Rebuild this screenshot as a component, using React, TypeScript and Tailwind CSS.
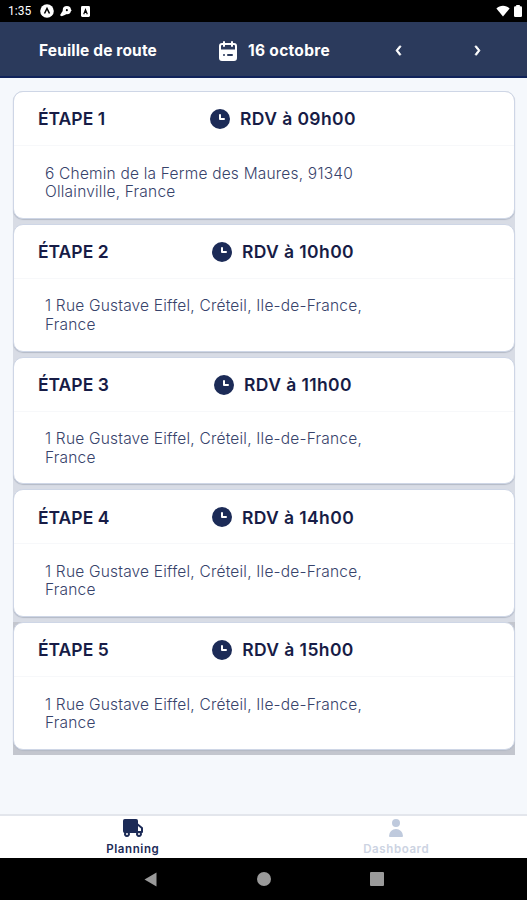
import type { ReactNode } from 'react';

type Stop = { step: number; time: string; address: string };

const CRETEIL = '1 Rue Gustave Eiffel, Créteil, Ile-de-France, France';

const STOPS: Stop[] = [
  { step: 1, time: '09h00', address: '6 Chemin de la Ferme des Maures, 91340 Ollainville, France' },
  { step: 2, time: '10h00', address: CRETEIL },
  { step: 3, time: '11h00', address: CRETEIL },
  { step: 4, time: '14h00', address: CRETEIL },
  { step: 5, time: '15h00', address: CRETEIL },
];

function Icon({ className, children }: { className: string; children: ReactNode }) {
  return (
    <svg viewBox="0 0 24 24" fill="currentColor" className={`block shrink-0 ${className}`} aria-hidden="true">
      {children}
    </svg>
  );
}

function StatusBar() {
  return (
    <div className="flex h-[22px] items-center bg-black pr-[5px] pl-2 text-white">
      <span className="w-8 font-[Roboto] text-xs">1:35</span>
      <svg viewBox="0 0 14 14" className="size-3.5" aria-hidden="true">
        <circle cx="7" cy="7" r="6.8" fill="#fff" />
        <path d="M4.5 9.5 7 4.5l2.5 5" fill="none" stroke="#000" strokeWidth="1.5" />
      </svg>
      <svg viewBox="0 0 14 14" className="ml-1.5 size-3" aria-hidden="true">
        <circle cx="8" cy="6" r="4.8" fill="#fff" />
        <path d="m0 12 3-5 4 4-5 2z" fill="#fff" />
        <path d="M11 4.5 14 6l-3 1.5z" fill="#fff" />
        <circle cx="8" cy="6" r="1.2" />
      </svg>
      <svg viewBox="0 0 10 12" className="ml-[9px] h-[11px] w-[9px]" aria-hidden="true">
        <rect width="10" height="12" rx="1.5" fill="#fff" />
        <path d="m3 9 2-5 2 5M3.7 7h2.6" fill="none" stroke="#000" strokeWidth="1.3" />
      </svg>
      <svg viewBox="0 0 14 12" className="ml-auto h-3 w-3.5" aria-hidden="true">
        <path d="M.4 3.5C4-.2 10-.2 13.6 3.5L7 11.5z" fill="#fff" />
      </svg>
      <svg viewBox="0 0 8 12" className="ml-1 h-3 w-2" aria-hidden="true">
        <rect x="2.2" width="3.6" height="2" fill="#fff" />
        <rect y="1.2" width="8" height="10.8" rx="1.2" fill="#fff" />
      </svg>
    </div>
  );
}

function Header() {
  return (
    <header className="flex h-14 items-center border-b-2 border-[#10235a] bg-[#2b3a5c] pt-1 text-[15.5px] font-bold whitespace-nowrap text-white">
      <h1 className="ml-[39px] w-[118px] tracking-[0.15px]">Feuille de route</h1>
      <Icon className="ml-[59px] size-6">
        <path d="M18 4h-1V3a1 1 0 0 0-2 0v1H9V3a1 1 0 0 0-2 0v1H6a3 3 0 0 0-3 3v12a3 3 0 0 0 3 3h12a3 3 0 0 0 3-3V7a3 3 0 0 0-3-3zM8 17a1 1 0 1 1 1-1 1 1 0 0 1-1 1zm8 0h-4a1 1 0 0 1 0-2h4a1 1 0 0 1 0 2zm3-6.5H5V7a1 1 0 0 1 1-1h1v1a1 1 0 0 0 2 0V6h6v1a1 1 0 0 0 2 0V6h1a1 1 0 0 1 1 1z" />
      </Icon>
      <span className="ml-2 w-[83px] tracking-[0.3px]">16 octobre</span>
      <button type="button" aria-label="Jour précédent" className="ml-[58px] pb-0.5">
        <Icon className="size-[19px] stroke-current stroke-1">
          <path d="M13.83 18a1 1 0 0 1-.78-.37l-3.83-5a1 1 0 0 1 0-1.27l4-5a1 1 0 0 1 1.54 1.28L11.29 12l3.32 4.36a1 1 0 0 1-.78 1.64z" />
        </Icon>
      </button>
      <button type="button" aria-label="Jour suivant" className="ml-[60px] pb-0.5">
        <Icon className="size-[19px] stroke-current stroke-1">
          <path d="M10.17 18a1 1 0 0 0 .78-.37l3.83-5a1 1 0 0 0 0-1.27l-4-5a1 1 0 0 0-1.54 1.28L12.71 12l-3.32 4.36a1 1 0 0 0 .78 1.64z" />
        </Icon>
      </button>
    </header>
  );
}

function StopCard({ stop }: { stop: Stop }) {
  return (
    <li className="h-[132.75px] bg-[#d8dce5] pb-[5px] first:rounded-t-[10px] last:bg-[#c3c6ce]">
      <article className="h-full rounded-[10px] border border-[#ced6e6] bg-white shadow-[0_1px_1px_#b4bac6]">
        <div className="flex h-[54px] items-center border-b border-[#f7f8fa] pt-px pl-6 text-[17.5px] font-semibold whitespace-nowrap text-[#171c46]">
          <h2 className="pt-px">ÉTAPE {stop.step}</h2>
          <div className="mr-[132px] ml-auto flex w-[200px] items-center justify-center">
            <Icon className="mr-2 size-6 text-[#1c2b57]">
              <path d="M12 2a10 10 0 1 0 10 10A10 10 0 0 0 12 2zm4 11h-4a1 1 0 0 1-1-1V8a1 1 0 0 1 2 0v3h3a1 1 0 0 1 0 2z" />
            </Icon>
            <span className="pt-px tracking-[0.4px]">RDV à {stop.time}</span>
          </div>
        </div>
        <address className="w-[370px] pt-[18.5px] pl-[31px] text-[15.5px] leading-[18.5px] font-light tracking-[0.2px] text-[#37436b] not-italic">
          {stop.address}
        </address>
      </article>
    </li>
  );
}

function TabBar() {
  return (
    <nav className="flex h-11 border-t-2 border-[#e3e6ec] bg-white text-[11.5px] leading-[18px] text-[#1c2b57]">
      <div className="flex flex-1 flex-col items-center pl-0.5">
        <Icon className="size-6">
          <path d="M21.6 11.22 17 7.52V5a1.91 1.91 0 0 0-1.81-2H3.79A1.91 1.91 0 0 0 2 5v10a2 2 0 0 0 1.2 1.88 3 3 0 1 0 5.6.12h6.36a3 3 0 1 0 5.64 0h.2a1 1 0 0 0 1-1v-4a1 1 0 0 0-.4-.78zM20 12.48V15h-3v-4.92zM7 18a1 1 0 1 1-1-1 1 1 0 0 1 1 1zm12 0a1 1 0 1 1-1-1 1 1 0 0 1 1 1z" />
        </Icon>
        <span className="font-semibold tracking-[0.6px]">Planning</span>
      </div>
      <div className="flex flex-1 flex-col items-center pl-0.5">
        <Icon className="size-6 text-[#bfcadd]">
          <path d="M12 11a4 4 0 1 0-4-4 4 4 0 0 0 4 4zM18 21a1 1 0 0 0 1-1 7 7 0 0 0-14 0 1 1 0 0 0 1 1z" />
        </Icon>
        <span className="font-semibold tracking-[0.6px] text-[#ccd3e2]">Dashboard</span>
      </div>
    </nav>
  );
}

function SystemNav() {
  return (
    <div className="flex h-[42px] items-center bg-black pl-36 text-[#9a9a9a]">
      <svg viewBox="0 0 13 15" className="h-[15px] w-[13px]" aria-hidden="true">
        <path d="M12.5.5v14L.5 7.5z" fill="currentColor" />
      </svg>
      <div className="ml-[100px] size-3.5 rounded-full bg-[#9a9a9a]" />
      <div className="ml-[99px] size-3.5 rounded-[1px] bg-[#9a9a9a]" />
    </div>
  );
}

export default function App() {
  return (
    <div className="flex h-[900px] w-[527px] flex-col overflow-hidden bg-[#f5f8fc] font-[Inter,'Liberation_Sans',sans-serif]">
      <StatusBar />
      <Header />
      <ul className="flex-1 pt-[13px] pr-3 pl-[13px]">
        {STOPS.map((stop) => (
          <StopCard key={stop.step} stop={stop} />
        ))}
      </ul>
      <TabBar />
      <SystemNav />
    </div>
  );
}
